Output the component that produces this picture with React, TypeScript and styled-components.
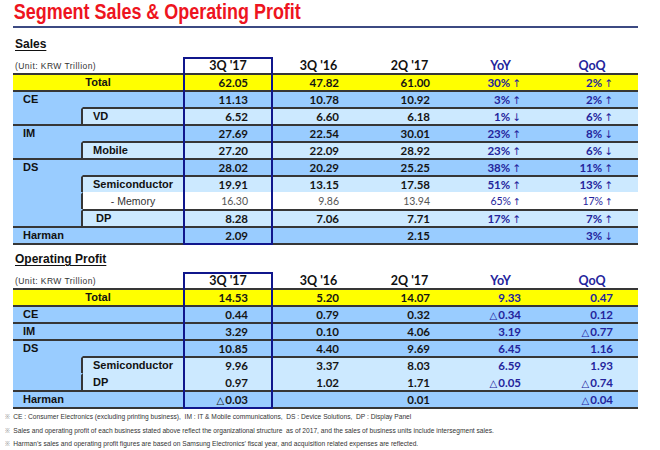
import React from 'react';
import styled, { createGlobalStyle } from 'styled-components';

const GlobalStyle = createGlobalStyle`
  html, body { margin: 0; padding: 0; background: #ffffff; }
  body { font-family: "Liberation Sans", Arial, sans-serif; }
`;

type Tone = 'yellow' | 'blue' | 'pale' | 'white';
const toneBg: Record<Tone, string> = {
  yellow: '#ffff00',
  blue: '#99ccff',
  pale: '#cce9ff',
  white: '#ffffff',
};
const LINE = '#363636';
const NAVY = '#24249c';

const Page = styled.div`
  width: 660px;
  height: 450px;
  box-sizing: border-box;
  padding: 0 22px 0 13px;
  overflow: hidden;
  background: #ffffff;
`;

const Title = styled.h1`
  margin: 0;
  padding-left: 1px;
  font-family: "Liberation Sans", sans-serif;
  font-weight: 700;
  font-size: 22px;
  line-height: 24px;
  color: #ee1420;
  white-space: nowrap;
  transform: scaleX(0.815);
  transform-origin: left center;
`;

const Rule = styled.div`
  margin-top: 2px;
  height: 2px;
  width: 625px;
  background: #3c4a82;
`;

const SectionTitle = styled.h2<{ $gap: number }>`
  margin: ${(p) => p.$gap}px 0 0 2px;
  font-size: 12px;
  line-height: 14px;
  font-weight: 700;
  color: #111111;
  text-decoration: underline;
  text-underline-offset: 2px;
`;

const TableWrap = styled.div<{ $gap: number }>`
  position: relative;
  margin-top: ${(p) => p.$gap}px;
  width: 625px;
`;

const Frame = styled.div`
  position: absolute;
  top: 0;
  bottom: 0;
  left: 170px;
  width: 90px;
  box-sizing: border-box;
  border: 2px solid #10168c;
  pointer-events: none;
`;

const Table = styled.table`
  width: 625px;
  table-layout: fixed;
  border-collapse: separate;
  border-spacing: 0;
`;

const HeadRow = styled.tr`
  height: 16px;
`;

const UnitCell = styled.th`
  padding: 0 0 0 2px;
  text-align: left;
  vertical-align: bottom;
  font-weight: 400;
  font-size: 8.5px;
  letter-spacing: 0.45px;
  line-height: 14px;
  color: #333333;
  white-space: nowrap;
`;

const HeadCell = styled.th<{ $accent?: boolean }>`
  padding: 0;
  text-align: center;
  vertical-align: bottom;
  font-family: Lato, "Liberation Sans", sans-serif;
  font-weight: 700;
  font-size: 12.5px;
  line-height: 15px;
  color: ${(p) => (p.$accent ? NAVY : '#111111')};
  white-space: pre;
`;

const BodyRow = styled.tr`
  height: 17px;
`;

const Cell = styled.td<{ $tone: Tone; $line: boolean; $last?: boolean }>`
  padding: 0;
  height: 15px;
  line-height: 15px;
  background: ${(p) => toneBg[p.$tone]};
  border-top: 2px solid ${(p) => (p.$line ? LINE : 'transparent')};
  border-bottom: ${(p) => (p.$last ? `2px solid ${LINE}` : '0')};
  white-space: nowrap;
  overflow: hidden;
`;

const Strip = styled(Cell)`
  border-right: 2px solid ${LINE};
`;

const Label = styled(Cell)<{ $center?: boolean; $indent?: number; $minor?: boolean }>`
  padding-left: ${(p) => (p.$center ? 0 : p.$indent ?? 10)}px;
  text-align: ${(p) => (p.$center ? 'center' : 'left')};
  font-weight: ${(p) => (p.$minor ? 400 : 700)};
  font-size: ${(p) => (p.$minor ? 10.5 : 11)}px;
  color: ${(p) => (p.$minor ? '#333333' : '#111111')};
`;

const Value = styled(Cell)<{ $accent?: boolean; $minor?: boolean }>`
  padding-right: 25px;
  text-align: right;
  font-family: Lato, "Liberation Sans", sans-serif;
  font-weight: ${(p) => (p.$minor ? 400 : 700)};
  font-size: ${(p) => (p.$minor ? 10.5 : 11.5)}px;
  color: ${(p) => (p.$accent ? NAVY : p.$minor ? '#555555' : '#151515')};
`;

const Arrow = styled.span<{ $minor?: boolean }>`
  font-family: "DejaVu Sans", sans-serif;
  font-weight: 400;
  font-size: ${(p) => (p.$minor ? 9.5 : 10.5)}px;
  line-height: 8px;
  margin-left: 2px;
`;

const Delta = styled.span`
  font-family: "DejaVu Sans", sans-serif;
  font-weight: 400;
  font-size: 10px;
  line-height: 8px;
  margin-right: 1px;
`;

const Notes = styled.div`
  margin: 1px 0 0 -8px;
  width: 780px;
  font-family: "Liberation Sans", sans-serif;
  font-size: 8px;
  line-height: 13.5px;
  color: #333333;
  transform: scaleX(0.83);
  transform-origin: left top;
`;

const Note = styled.p`
  margin: 0;
  white-space: pre;
`;

const Mark = styled.span`
  color: #888888;
  font-size: 7px;
  line-height: 8px;
  margin-right: 4px;
`;

type Kind = 'total' | 'group' | 'sub' | 'minor';
interface RowDef {
  kind: Kind;
  label: string;
  values: string[];
  line?: boolean;
  last?: boolean;
  indent?: number;
}

const salesRows: RowDef[] = [
  { kind: 'total', label: 'Total', values: ['62.05', '47.82', '61.00', '30% ↑', '2% ↑'] },
  { kind: 'group', label: 'CE', values: ['11.13', '10.78', '10.92', '3% ↑', '2% ↑'] },
  { kind: 'sub', label: 'VD', values: ['6.52', '6.60', '6.18', '1% ↓', '6% ↑'] },
  { kind: 'group', label: 'IM', values: ['27.69', '22.54', '30.01', '23% ↑', '8% ↓'] },
  { kind: 'sub', label: 'Mobile', values: ['27.20', '22.09', '28.92', '23% ↑', '6% ↓'] },
  { kind: 'group', label: 'DS', values: ['28.02', '20.29', '25.25', '38% ↑', '11% ↑'] },
  { kind: 'sub', label: 'Semiconductor', values: ['19.91', '13.15', '17.58', '51% ↑', '13% ↑'] },
  { kind: 'minor', label: '- Memory', values: ['16.30', '9.86', '13.94', '65% ↑', '17% ↑'], line: false },
  { kind: 'sub', label: 'DP', values: ['8.28', '7.06', '7.71', '17% ↑', '7% ↑'], indent: 13 },
  { kind: 'group', label: 'Harman', values: ['2.09', '', '2.15', '', '3% ↓'], last: true },
];

const profitRows: RowDef[] = [
  { kind: 'total', label: 'Total', values: ['14.53', '5.20', '14.07', '9.33', '0.47'] },
  { kind: 'group', label: 'CE', values: ['0.44', '0.79', '0.32', '△0.34', '0.12'] },
  { kind: 'group', label: 'IM', values: ['3.29', '0.10', '4.06', '3.19', '△0.77'] },
  { kind: 'group', label: 'DS', values: ['10.85', '4.40', '9.69', '6.45', '1.16'] },
  { kind: 'sub', label: 'Semiconductor', values: ['9.96', '3.37', '8.03', '6.59', '1.93'] },
  { kind: 'sub', label: 'DP', values: ['0.97', '1.02', '1.71', '△0.05', '△0.74'], line: false },
  { kind: 'group', label: 'Harman', values: ['△0.03', '', '0.01', '', '△0.04'], last: true },
];

const headers = ["3Q '17", "3Q '16", "2Q '17", 'YoY', 'QoQ'];
const colWidths = [70, 100, 90, 91, 91, 91, 92];

const toneOf = (k: Kind): Tone =>
  k === 'total' ? 'yellow' : k === 'group' ? 'blue' : k === 'sub' ? 'pale' : 'white';

function Figure({ text, minor }: { text: string; minor?: boolean }) {
  const arrow = text.match(/^(.*?)\s*([↑↓])$/);
  if (arrow) {
    return (
      <>
        {arrow[1]}
        <Arrow $minor={minor}>{arrow[2]}</Arrow>
      </>
    );
  }
  if (text.startsWith('△')) {
    return (
      <>
        <Delta>△</Delta>
        {text.slice(1)}
      </>
    );
  }
  return <>{text}</>;
}

function DataRow({ row }: { row: RowDef }) {
  const tone = toneOf(row.kind);
  const line = row.line ?? true;
  const minor = row.kind === 'minor';
  const nested = row.kind === 'sub' || minor;
  return (
    <BodyRow>
      {nested ? (
        <>
          <Strip $tone="blue" $line={false} $last={row.last} />
          <Label $tone={tone} $line={line} $last={row.last} $minor={minor} $center={minor} $indent={row.indent}>
            {row.label}
          </Label>
        </>
      ) : (
        <Label colSpan={2} $tone={tone} $line={line} $last={row.last} $center={row.kind === 'total'}>
          {row.label}
        </Label>
      )}
      {row.values.map((v, i) => (
        <Value key={i} $tone={tone} $line={line} $last={row.last} $accent={i >= 3} $minor={minor}>
          <Figure text={v} minor={minor} />
        </Value>
      ))}
    </BodyRow>
  );
}

function DataTable({ rows, gap }: { rows: RowDef[]; gap: number }) {
  return (
    <TableWrap $gap={gap}>
      <Table>
        <colgroup>
          {colWidths.map((w, i) => (
            <col key={i} style={{ width: w }} />
          ))}
        </colgroup>
        <thead>
          <HeadRow>
            <UnitCell colSpan={2}>(Unit: KRW Trillion)</UnitCell>
            {headers.map((h, i) => (
              <HeadCell key={h} $accent={i >= 3}>
                {h}
              </HeadCell>
            ))}
          </HeadRow>
        </thead>
        <tbody>
          {rows.map((r, i) => (
            <DataRow key={i} row={r} />
          ))}
        </tbody>
      </Table>
      <Frame />
    </TableWrap>
  );
}

export default function App() {
  return (
    <>
      <GlobalStyle />
      <Page>
        <Title>Segment Sales &amp; Operating Profit</Title>
        <Rule />
        <SectionTitle $gap={9}>Sales</SectionTitle>
        <DataTable rows={salesRows} gap={6} />
        <SectionTitle $gap={7}>Operating Profit</SectionTitle>
        <DataTable rows={profitRows} gap={6} />
        <Notes>
          <Note>
            <Mark>※</Mark>CE : Consumer Electronics (excluding printing business),  IM : IT &amp; Mobile communications,  DS : Device Solutions,  DP : Display Panel
          </Note>
          <Note>
            <Mark>※</Mark>Sales and operating profit of each business stated above reflect the organizational structure  as of 2017, and the sales of business units include intersegment sales.
          </Note>
          <Note>
            <Mark>※</Mark>Harman’s sales and operating profit figures are based on Samsung Electronics’ fiscal year, and acquisition related expenses are reflected.
          </Note>
        </Notes>
      </Page>
    </>
  );
}
